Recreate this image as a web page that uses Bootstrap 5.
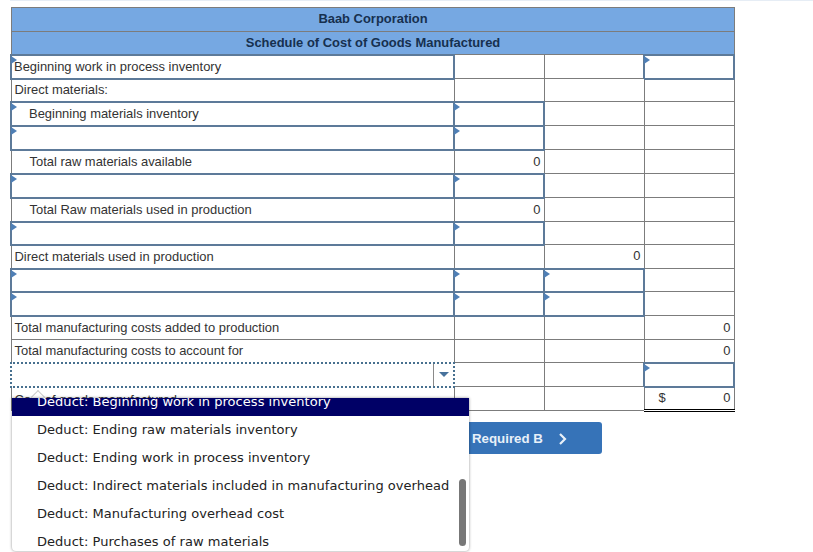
<!DOCTYPE html>
<html lang="en"><head><meta charset="utf-8"><title>Schedule</title>
<link href="https://cdn.jsdelivr.net/npm/bootstrap@5.3.0/dist/css/bootstrap.min.css" rel="stylesheet">
<style>
html,body{height:552px;overflow:hidden;background:#fff}
body{font-family:"Liberation Sans",Arial,sans-serif;position:relative}
.topline{height:1px;margin-left:10px;background:#e6edf5}
.sheet{margin:6px 0 0 10px}
.sched{table-layout:fixed;border-collapse:collapse;width:724px;font-size:12.95px;color:#333;margin:0}
.sched td{border:1px solid #7c7c7c;padding:0 2px 0 3px;height:24px;line-height:16px;position:relative;vertical-align:middle;background:#fff}
.sched td.inp{padding-left:2px}
.sched tr.hd td{background:#76a8e2;color:#16304f;font-weight:700;text-align:center;height:23.5px}
.sched tr.s td{height:23px}
.sched td.ind{padding-left:18px}
.sched td.inp.ind{padding-left:17px}
.sched td.num{text-align:right;padding-right:3px}
.sched td.inp{border:2px solid #5d7a99}
.sched td.inp::before{content:"";position:absolute;left:-1px;top:0;border-left:6px solid #4f7fb5;border-top:4px solid transparent;border-bottom:4px solid transparent}
.sched td.dot{border:2px dotted #47708f;padding:0}
.arrowbox{position:absolute;right:0;top:0;bottom:0;width:20px;border-left:1px solid #8a8a8a;display:flex;align-items:center;justify-content:center}
.arrowbox i{display:block;border-top:5px solid #47729c;border-left:5px solid transparent;border-right:5px solid transparent}
.sched td.dbl{border-bottom:3px double #000;border-top:1px solid #000}
.sched td.hidrow{padding-top:2px}
.dollar{float:left;padding-left:11px}
.reqbtn{position:absolute;left:442px;top:422px;width:160px;height:32px;background:#3673b8;color:#e8f0f8;font-weight:700;font-size:13.3px;border-radius:3px;display:flex;align-items:center;padding:1px 0 0 30px;gap:15px}
.pop{position:absolute;left:12px;top:398px;width:457px;height:153px;background:#fff;border-radius:0 0 4px 4px;box-shadow:0 0 3px rgba(0,0,0,.45);overflow:hidden;font-family:"DejaVu Sans",sans-serif;font-size:13px;letter-spacing:.035px;color:#222}
.pop ul{margin:-10px 0 0;padding:0;list-style:none}
.pop li{height:28px;line-height:28px;padding-left:25px;white-space:nowrap}
.pop li.on{background:#000066;color:#fff}
.thumb{position:absolute;left:447px;top:81px;width:7px;height:67px;border-radius:4px;background:#777}
.notch{position:absolute;left:33px;top:392px;width:10px;height:10px;background:#fff;border:1px solid #ccc;border-right:0;border-bottom:0;transform:rotate(45deg)}
</style></head><body>
<div class="topline"></div>
<div class="sheet">
<table class="sched">
<colgroup><col style="width:443px"><col style="width:90px"><col style="width:100px"><col style="width:90px"></colgroup>
<tbody>
<tr class="hd"><td colspan="4">Baab Corporation</td></tr>
<tr class="hd"><td colspan="4">Schedule of Cost of Goods Manufactured</td></tr>
<tr><td class="inp">Beginning work in process inventory</td><td></td><td></td><td class="inp"></td></tr>
<tr class="s"><td>Direct materials:</td><td></td><td></td><td></td></tr>
<tr><td class="inp ind">Beginning materials inventory</td><td class="inp"></td><td></td><td></td></tr>
<tr><td class="inp"></td><td class="inp"></td><td></td><td></td></tr>
<tr><td class="ind">Total raw materials available</td><td class="num">0</td><td></td><td></td></tr>
<tr><td class="inp"></td><td class="inp"></td><td></td><td></td></tr>
<tr><td class="ind">Total Raw materials used in production</td><td class="num">0</td><td></td><td></td></tr>
<tr class="s"><td class="inp"></td><td class="inp"></td><td></td><td></td></tr>
<tr><td>Direct materials used in production</td><td></td><td class="num">0</td><td></td></tr>
<tr class="s"><td class="inp"></td><td class="inp"></td><td class="inp"></td><td></td></tr>
<tr><td class="inp"></td><td class="inp"></td><td class="inp"></td><td></td></tr>
<tr><td>Total manufacturing costs added to production</td><td></td><td></td><td class="num">0</td></tr>
<tr class="s"><td>Total manufacturing costs to account for</td><td></td><td></td><td class="num">0</td></tr>
<tr><td class="dot"><span class="arrowbox"><i></i></span></td><td></td><td></td><td class="inp"></td></tr>
<tr><td class="hidrow">Cost of goods manufactured</td><td></td><td></td><td class="num dbl"><span class="dollar">$</span>0</td></tr>
</tbody></table>
</div>
<div class="reqbtn"><span>Required B</span><svg width="10" height="12" viewBox="0 0 10 12"><path d="M2 1l5 5-5 5" fill="none" stroke="#e8f0f8" stroke-width="2.2"/></svg></div>
<div class="notch"></div>
<div class="pop"><ul>
<li class="on">Deduct: Beginning work in process inventory</li>
<li>Deduct: Ending raw materials inventory</li>
<li>Deduct: Ending work in process inventory</li>
<li>Deduct: Indirect materials included in manufacturing overhead</li>
<li>Deduct: Manufacturing overhead cost</li>
<li>Deduct: Purchases of raw materials</li>
</ul><div class="thumb"></div></div>
<script src="https://cdn.jsdelivr.net/npm/bootstrap@5.3.0/dist/js/bootstrap.bundle.min.js"></script>
</body></html>
